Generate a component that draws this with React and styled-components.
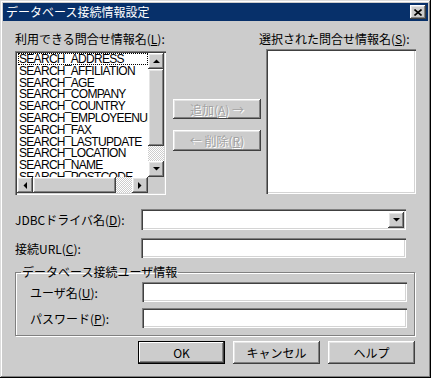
import React from 'react';
import styled, { createGlobalStyle, css } from 'styled-components';

const GlobalStyle = createGlobalStyle`
  body {
    margin: 0;
    background: #cccccc;
    font-family: "Noto Sans CJK JP", "Liberation Sans", sans-serif;
    font-size: 12px;
  }
`;

const sunken = css`
  box-shadow: inset 1px 1px #808080, inset 2px 2px #404040,
    inset -1px -1px #ffffff, inset -2px -2px #d4d4d4;
`;

const raised = css`
  box-shadow: inset -1px -1px #404040, inset 1px 1px #ffffff,
    inset -2px -2px #808080, inset 2px 2px #e4e4e4;
`;

const Dialog = styled.div`
  width: 431px;
  height: 378px;
  box-sizing: border-box;
  padding: 3px;
  background: #cccccc;
  box-shadow: inset -1px -1px #000, inset 1px 1px #dcdcdc,
    inset -2px -2px #808080, inset 2px 2px #fff;
  display: flex;
  flex-direction: column;
`;

const TitleBar = styled.div`
  height: 18px;
  background: #07306a;
  color: #fff;
  display: flex;
  align-items: center;
  justify-content: space-between;
  padding: 0 2px 0 3px;
  font-size: 12px;
  line-height: 18px;
`;

const CloseButton = styled.div`
  width: 16px;
  height: 14px;
  background: #cccccc;
  ${raised};
  display: flex;
  align-items: center;
  justify-content: center;
`;

const Body = styled.div`
  flex: 1;
  display: flex;
  flex-direction: column;
  padding: 11px 12px 0 12px;
  color: #000;
`;

const TopSection = styled.div`
  display: flex;
  height: 163px;
`;

const Column = styled.div`
  display: flex;
  flex-direction: column;
  width: ${(p) => p.width}px;
  margin-left: ${(p) => p.offset || 0}px;
  padding-top: ${(p) => p.top || 0}px;
  gap: ${(p) => p.gap || 0}px;
`;

const Label = styled.div`
  height: 14px;
  line-height: 14px;
  white-space: nowrap;
`;

const ListBox = styled.div`
  background: #fff;
  ${sunken};
  width: ${(p) => p.width}px;
  height: ${(p) => p.height}px;
  align-self: ${(p) => p.align || 'stretch'};
  display: grid;
  grid-template-columns: 1fr 16px;
  grid-template-rows: 1fr 16px;
  padding: 2px;
  box-sizing: border-box;
  overflow: hidden;
`;

const EmptyList = styled(ListBox)`
  display: block;
`;

const Items = styled.div`
  overflow: hidden;
  font-family: "Liberation Sans", "Noto Sans CJK JP", sans-serif;
  font-size: 12px;
  letter-spacing: -0.7px;
  white-space: nowrap;
  padding-left: 1px;
`;

const Item = styled.div`
  height: 11.8px;
  line-height: 12px;
  padding-left: 1px;
  ${(p) => p.focused && css`
    outline: 1px dotted #000;
    outline-offset: -1px;
  `}
`;

const VScroll = styled.div`
  display: flex;
  flex-direction: column;
  grid-row: 1;
  grid-column: 2;
`;

const HScroll = styled.div`
  display: flex;
  grid-row: 2;
  grid-column: 1;
`;

const Corner = styled.div`
  grid-row: 2;
  grid-column: 2;
  background: #cccccc;
`;

const ScrollBtn = styled.div`
  width: 16px;
  height: 16px;
  flex-shrink: 0;
  background: #cccccc;
  ${raised};
  display: flex;
  align-items: center;
  justify-content: center;
`;

const Thumb = styled.div`
  background: #cccccc;
  ${raised};
  flex: ${(p) => p.size};
`;

const Track = styled.div`
  flex: ${(p) => p.size};
  background: repeating-conic-gradient(#ffffff 0 25%, #cccccc 0 50%) 0 0 / 2px 2px;
`;

const Button = styled.div`
  width: ${(p) => p.width || 88}px;
  height: ${(p) => p.height || 20}px;
  box-sizing: border-box;
  background: #cccccc;
  ${raised};
  display: flex;
  align-items: center;
  justify-content: center;
  white-space: nowrap;
  ${(p) => p.disabled && css`
    color: #a2a2a2;
    text-shadow: 1px 1px #ffffff;
  `}
  ${(p) => p.primary && css`
    box-shadow: inset 0 0 0 1px #000, inset -2px -2px #404040,
      inset 2px 2px #ffffff, inset -3px -3px #808080;
  `}
`;

const FormRow = styled.div`
  display: flex;
  align-items: center;
  height: ${(p) => p.height || 20}px;
  margin-top: ${(p) => p.top || 0}px;
  padding-left: ${(p) => p.indent || 0}px;
`;

const FieldLabel = styled.div`
  width: ${(p) => p.width || 126}px;
  flex-shrink: 0;
  white-space: nowrap;
`;

const Input = styled.div`
  width: 265px;
  height: ${(p) => p.height || 20}px;
  box-sizing: border-box;
  background: #fff;
  ${sunken};
  display: flex;
  justify-content: flex-end;
  align-items: center;
  padding: 2px;
`;

const GroupBox = styled.fieldset`
  margin: 8px 0 0 0;
  padding: 4px 0 7px 5px;
  width: 400px;
  box-sizing: border-box;
  border: 1px solid #808080;
  box-shadow: 1px 1px #fff, inset 1px 1px #fff;
  height: 70px;
`;

const Legend = styled.legend`
  padding: 0 1px;
  line-height: 12px;
`;

const ButtonRow = styled.div`
  display: flex;
  justify-content: flex-end;
  gap: 8px;
  margin-top: 5px;
  width: 400px;
`;

const Arrow = ({ dir }) => {
  const pts = {
    up: '0,4 7,4 3.5,0.5',
    down: '0,0 7,0 3.5,3.5',
    left: '4,0 4,7 0.5,3.5',
    right: '0,0 0,7 3.5,3.5',
  }[dir];
  const horizontal = dir === 'left' || dir === 'right';
  return (
    <svg width={horizontal ? 4 : 7} height={horizontal ? 7 : 4} viewBox={horizontal ? '0 0 4 7' : '0 0 7 4'}>
      <polygon points={pts} fill="#000" />
    </svg>
  );
};

const items = [
  'SEARCH_ADDRESS',
  'SEARCH_AFFILIATION',
  'SEARCH_AGE',
  'SEARCH_COMPANY',
  'SEARCH_COUNTRY',
  'SEARCH_EMPLOYEENUM',
  'SEARCH_FAX',
  'SEARCH_LASTUPDATE',
  'SEARCH_LOCATION',
  'SEARCH_NAME',
  'SEARCH_POSTCODE',
];

export default function App() {
  return (
    <>
      <GlobalStyle />
      <Dialog>
        <TitleBar>
          <span>データベース接続情報設定</span>
          <CloseButton>
            <svg width="8" height="7" viewBox="0 0 8 7">
              <path d="M0.5 0.5 L7.5 6.5 M7.5 0.5 L0.5 6.5" stroke="#000" strokeWidth="1.6" />
            </svg>
          </CloseButton>
        </TitleBar>
        <Body>
          <TopSection>
            <Column width={151} gap={5}>
              <Label>利用できる問合せ情報名(<u>L</u>):</Label>
              <ListBox width={151} height={144}>
                <Items>
                  {items.map((it, i) => (
                    <Item key={it} focused={i === 0}>{it}</Item>
                  ))}
                </Items>
                <VScroll>
                  <ScrollBtn><Arrow dir="up" /></ScrollBtn>
                  <Thumb size={80} />
                  <Track size={16} />
                  <ScrollBtn><Arrow dir="down" /></ScrollBtn>
                </VScroll>
                <HScroll>
                  <ScrollBtn><Arrow dir="left" /></ScrollBtn>
                  <Thumb size={83} />
                  <Track size={16} />
                  <ScrollBtn><Arrow dir="right" /></ScrollBtn>
                </HScroll>
                <Corner />
              </ListBox>
            </Column>
            <Column width={88} offset={7} top={67} gap={11}>
              <Button disabled>追加(<u>A</u>) →</Button>
              <Button disabled height={21}>← 削除(<u>R</u>)</Button>
            </Column>
            <Column width={158} offset={-2} gap={3}>
              <Label>選択された問合せ情報名(<u>S</u>):</Label>
              <EmptyList width={150} height={145} align="flex-end" />
            </Column>
          </TopSection>
          <FormRow top={14} height={21}>
            <FieldLabel>JDBCドライバ名(<u>D</u>):</FieldLabel>
            <Input height={21}>
              <ScrollBtn><Arrow dir="down" /></ScrollBtn>
            </Input>
          </FormRow>
          <FormRow top={8}>
            <FieldLabel>接続URL(<u>C</u>):</FieldLabel>
            <Input />
          </FormRow>
          <GroupBox>
            <Legend>データベース接続ユーザ情報</Legend>
            <FormRow indent={9}>
              <FieldLabel width={112}>ユーザ名(<u>U</u>):</FieldLabel>
              <Input />
            </FormRow>
            <FormRow top={6} indent={9}>
              <FieldLabel width={112}>パスワード(<u>P</u>):</FieldLabel>
              <Input />
            </FormRow>
          </GroupBox>
          <ButtonRow>
            <Button primary width={87} height={23}>OK</Button>
            <Button width={87} height={23}>キャンセル</Button>
            <Button width={87} height={23}>ヘルプ</Button>
          </ButtonRow>
        </Body>
      </Dialog>
    </>
  );
}
